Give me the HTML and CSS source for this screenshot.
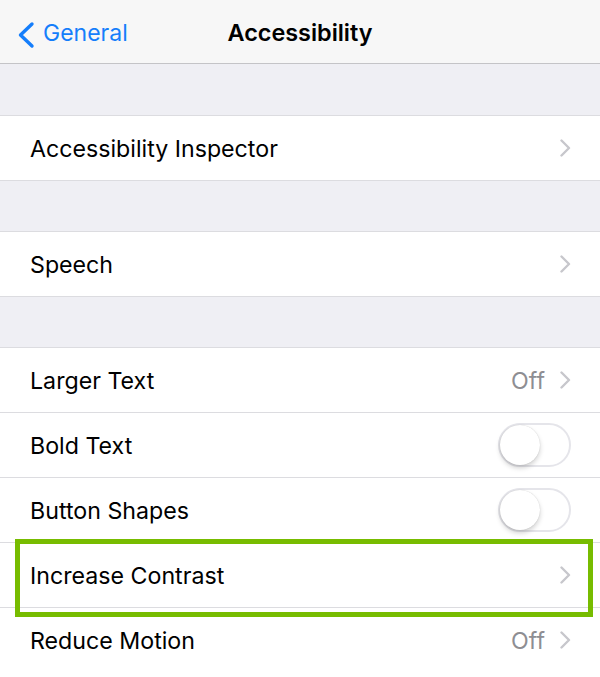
FILE: index.html
```html
<!DOCTYPE html>
<html>
<head>
<meta charset="utf-8">
<link rel="stylesheet" href="styles.css">
</head>
<body>
<div class="screen">
  <header class="nav">
    <div class="back">
      <svg class="back-chev" width="19" height="28" viewBox="0 0 19 28"><path d="M16 3 L4.5 14 L16 25" fill="none" stroke="#157efb" stroke-width="3.4" stroke-linecap="round" stroke-linejoin="round"/></svg>
      <span class="back-label">General</span>
    </div>
    <div class="title">Accessibility</div>
    <div class="nav-right"></div>
  </header>

  <div class="gap first"></div>
  <section class="group">
    <div class="row"><span class="label">Accessibility Inspector</span><span class="accessory"><svg class="chev" width="11" height="18" viewBox="0 0 11 18"><path d="M1.5 1.5 L9 9 L1.5 16.5" fill="none" stroke="#c7c7cc" stroke-width="2.4" stroke-linecap="round" stroke-linejoin="round"/></svg></span></div>
  </section>

  <div class="gap"></div>
  <section class="group">
    <div class="row"><span class="label">Speech</span><span class="accessory"><svg class="chev" width="11" height="18" viewBox="0 0 11 18"><path d="M1.5 1.5 L9 9 L1.5 16.5" fill="none" stroke="#c7c7cc" stroke-width="2.4" stroke-linecap="round" stroke-linejoin="round"/></svg></span></div>
  </section>

  <div class="gap"></div>
  <section class="group last">
    <div class="row"><span class="label">Larger Text</span><span class="accessory"><span class="value">Off</span><svg class="chev" width="11" height="18" viewBox="0 0 11 18"><path d="M1.5 1.5 L9 9 L1.5 16.5" fill="none" stroke="#c7c7cc" stroke-width="2.4" stroke-linecap="round" stroke-linejoin="round"/></svg></span></div>
    <div class="row"><span class="label">Bold Text</span><span class="accessory"><span class="toggle"><span class="knob"></span></span></span></div>
    <div class="row"><span class="label">Button Shapes</span><span class="accessory"><span class="toggle"><span class="knob"></span></span></span></div>
    <div class="row highlighted"><span class="label">Increase Contrast</span><span class="accessory"><svg class="chev" width="11" height="18" viewBox="0 0 11 18"><path d="M1.5 1.5 L9 9 L1.5 16.5" fill="none" stroke="#c7c7cc" stroke-width="2.4" stroke-linecap="round" stroke-linejoin="round"/></svg></span><span class="highlight-box"></span></div>
    <div class="row"><span class="label">Reduce Motion</span><span class="accessory"><span class="value">Off</span><svg class="chev" width="11" height="18" viewBox="0 0 11 18"><path d="M1.5 1.5 L9 9 L1.5 16.5" fill="none" stroke="#c7c7cc" stroke-width="2.4" stroke-linecap="round" stroke-linejoin="round"/></svg></span></div>
  </section>
</div>
</body>
</html>
```
FILE: styles.css
```css
html, body {
  margin: 0;
  padding: 0;
}
body {
  background: #efeff4;
  font-family: Inter, "Liberation Sans", Arial, sans-serif;
  -webkit-font-smoothing: antialiased;
}
.screen {
  width: 600px;
  height: 677px;
  overflow: hidden;
  background: #efeff4;
  display: flex;
  flex-direction: column;
}
.nav {
  flex: none;
  height: 64px;
  box-sizing: border-box;
  border-bottom: 1px solid #c4c4c7;
  background: #f7f7f7;
  display: grid;
  grid-template-columns: 1fr auto 1fr;
  align-items: center;
  padding-top: 2px;
}
.back {
  display: flex;
  align-items: center;
  padding-left: 16px;
  color: #157efb;
}
.back-chev {
  display: block;
  margin-top: 5px;
}
.back-label {
  font-size: 23px;
  margin-left: 8px;
}
.title {
  font-size: 23.4px;
  font-weight: 600;
  color: #000;
}
.gap {
  flex: none;
  height: 50px;
}
.gap.first {
  height: 51px;
}
.group {
  flex: none;
  background: #fff;
  border-top: 1px solid #dcdce0;
}
.group.last {
  flex: 1 0 auto;
}
.row {
  position: relative;
  height: 64px;
  border-bottom: 1px solid #dcdce0;
  display: flex;
  align-items: center;
  justify-content: space-between;
  padding: 0 29px 0 30px;
}
.group.last .row:last-child {
  border-bottom: none;
}
.label {
  font-size: 23.2px;
  color: #000;
  padding-top: 2px;
}
.accessory {
  display: flex;
  align-items: center;
}
.value {
  font-size: 23.2px;
  color: #8e8e93;
  margin-right: 15px;
  padding-top: 2px;
}
.chev {
  display: block;
}
.toggle {
  position: relative;
  display: block;
  width: 73px;
  height: 44px;
  box-sizing: border-box;
  border: 2px solid #e5e5ea;
  border-radius: 22px;
  background: #fff;
}
.knob {
  position: absolute;
  left: 0;
  top: 0;
  width: 40px;
  height: 40px;
  border-radius: 50%;
  background: #fff;
  box-shadow: 0 3px 5px rgba(0, 0, 0, 0.18), 0 0 1px rgba(0, 0, 0, 0.2);
}
.highlight-box {
  position: absolute;
  left: 15px;
  top: -4px;
  width: 578px;
  height: 78px;
  box-sizing: border-box;
  border: 5px solid #77bc00;
  pointer-events: none;
}
```
